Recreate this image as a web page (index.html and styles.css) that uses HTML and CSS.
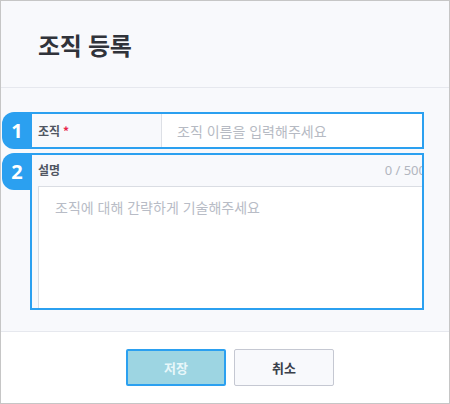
FILE: index.html
```html
<html lang="ko">
<head>
  <meta charset="UTF-8" />
  <title>조직 등록</title>
  <meta content="width=device-width, initial-scale=1" name="viewport" />
  <link rel="stylesheet" href="styles.css">
</head>
<body>

<div class="modal">
    <div class="modal_header">
        <h1 class="modal_title">조직 등록</h1>
    </div>

    <div class="modal_body">
        <div class="field_row">
            <div class="badge">1</div>
            <div class="field_box field_inline">
                <label class="field_label" for="org_name">조직<span class="required">*</span></label>
                <input class="field_input" type="text" id="org_name" placeholder="조직 이름을 입력해주세요">
            </div>
        </div>

        <div class="field_row">
            <div class="badge">2</div>
            <div class="field_box field_block">
                <div class="field_head">
                    <label class="field_label" for="org_desc">설명</label>
                    <span class="counter">0 / 500</span>
                </div>
                <textarea class="field_textarea" id="org_desc" placeholder="조직에 대해 간략하게 기술해주세요"></textarea>
            </div>
        </div>
    </div>

    <div class="modal_footer">
        <button class="btn btn_save" type="button">저장</button>
        <button class="btn btn_cancel" type="button">취소</button>
    </div>
</div>

</body>
</html>
```

FILE: styles.css
```css
*{box-sizing:border-box; margin:0; padding:0;}
body{width:450px; height:404px; font-family:"Noto Sans CJK KR","Noto Sans",sans-serif; color:#333;}

.modal{width:450px; height:404px; border:solid 1px #c6c6c6; display:flex; flex-direction:column; overflow:hidden;}

.modal_header{height:87px; background-color:#f8f9fc; border-bottom:solid 1px #e6e8ee;
              display:flex; align-items:center; padding-left:37px;}
.modal_title{font-size:24px; font-weight:700; color:#30333a; letter-spacing:-0.3px;}

.modal_body{height:244px; background-color:#f8f9fc; border-bottom:solid 1px #e6e8ee;
            padding:24px 0 0 1px; display:flex; flex-direction:column; gap:4px;}

.field_row{display:flex; align-items:flex-start;}
.badge{width:28px; height:37px; background-color:#2ba0f0; color:#fff; border-radius:12px 0 0 12px;
       font-family:"Noto Sans",sans-serif; font-size:20px; font-weight:700;
       display:flex; align-items:center; justify-content:center; padding-left:2px;}

.field_box{width:394px; border:solid 2px #2ba0f0; overflow:hidden;}
.field_inline{height:37px; display:flex;}
.field_block{height:157px; display:flex; flex-direction:column; padding-left:6px;}

.field_label{font-size:12px; font-weight:700; color:#505662;}
.required{color:#e8254a; margin-left:3px;}

.field_inline .field_label{width:130px; flex:none; padding-left:6px; display:flex; align-items:center;
                           border-right:solid 1px #dde0e6;}
.field_input{flex:1; border:none; outline:none; background-color:#fff; padding-left:15px;
             font-family:"Noto Sans CJK KR",sans-serif; font-size:14px; color:#333;}
.field_input::placeholder{color:#b6bac3;}

.field_head{height:31px; flex:none; display:flex; justify-content:space-between; align-items:center;
            margin-right:-4px; padding-bottom:2px;}
.counter{font-size:13px; color:#b2b6bf; font-family:"Noto Sans","Noto Sans CJK KR",sans-serif;}

.field_textarea{width:400px; height:140px; flex:none; border:solid 1px #dadde3; background-color:#fff;
                resize:none; outline:none; padding:10px 16px;
                font-family:"Noto Sans CJK KR",sans-serif; font-size:14px; color:#333;}
.field_textarea::placeholder{color:#b8bcc6;}

.modal_footer{flex:1; background-color:#fff; display:flex; justify-content:center; gap:8px;
              padding:17px 0 0 10px;}
.btn{width:100px; height:37px; font-family:"Noto Sans CJK KR",sans-serif; font-size:13px; font-weight:700;
     border-radius:2px; cursor:pointer;}
.btn_save{background-color:#9dd5e2; color:#e8f7fa; border:solid 2px #2ba0f0;}
.btn_cancel{background-color:#f8f9fc; color:#3a3f4a; border:solid 1px #c5c8d2;}
```
